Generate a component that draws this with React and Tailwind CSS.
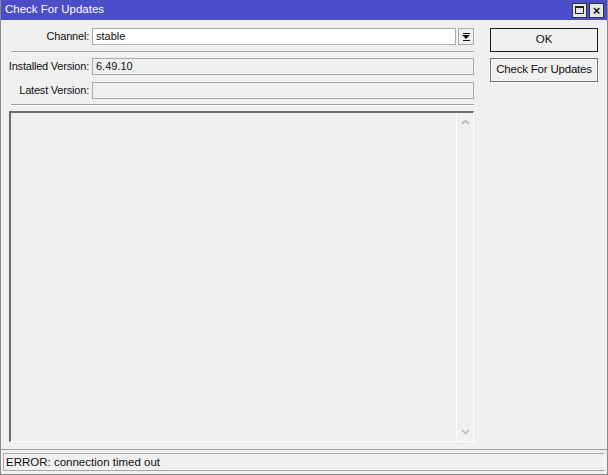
import React from "react";

const font = { fontFamily: '"Liberation Sans", Arial, sans-serif' };

const Field = ({ label, value, white, children }) => (
  <div className="flex items-center h-[17px]">
    <span className="w-[90px] pr-[3px] text-right text-[11px] tracking-[-0.2px] text-[#111] whitespace-nowrap">
      {label}
    </span>
    <div
      className={`flex-1 h-[17px] border border-[#a9a9a9] px-[3px] text-[11px] leading-[15px] text-[#111] ${
        white ? "bg-white" : "bg-[#f0f0f0]"
      }`}
    >
      {value}
    </div>
    {children}
  </div>
);

const App = () => {
  return (
    <div
      className="w-[608px] h-[475px] bg-[#f0f0f0] flex flex-col border-x border-b border-[#8a8a8a]"
      style={font}
    >
      {/* title bar */}
      <div className="h-[20px] bg-[#4b4ec8] flex items-center pl-[4px] pr-[3px] shrink-0">
        <span className="flex-1 text-white text-[11.5px]">Check For Updates</span>
        <div className="flex gap-[2px]">
          <div className="w-[15px] h-[15px] bg-[#e6e6e6] border border-[#333] flex items-center justify-center">
            <div className="w-[9px] h-[8px] border border-[#222] border-t-2" />
          </div>
          <div className="w-[15px] h-[15px] bg-[#e6e6e6] border border-[#333] flex items-center justify-center text-[13px] font-bold leading-none text-[#111]">
            ×
          </div>
        </div>
      </div>

      <div className="flex flex-1 min-h-0">
        {/* left column */}
        <div className="w-[473px] flex flex-col pl-[1px] pt-[8px]">
          <Field label="Channel:" value="stable" white>
            <div className="w-[16px] h-[17px] ml-[2px] border border-[#a9a9a9] bg-[#f0f0f0] flex flex-col items-center justify-center">
              <div className="w-[7px] h-[1px] bg-[#111]" />
              <div className="w-0 h-0 mt-[1px] border-x-[4px] border-x-transparent border-t-[4px] border-t-[#111]" />
              <div className="w-[7px] h-[1px] bg-[#111] mt-[1px]" />
            </div>
          </Field>
          <div className="ml-[9px] mt-[6px] h-[2px] border-t border-[#a0a0a0] border-b border-b-white" />
          <div className="mt-[5px] flex flex-col gap-[7px]">
            <Field label="Installed Version:" value="6.49.10" />
            <Field label="Latest Version:" value="" />
          </div>
          <div className="ml-[9px] mt-[5px] h-[2px] border-t border-[#a0a0a0] border-b border-b-white" />
          {/* log area */}
          <div className="ml-[7px] mt-[5px] flex-1 mb-[7px] border-t-2 border-l-2 border-t-[#6d6d6d] border-l-[#6d6d6d] border-r border-b border-r-white border-b-white flex">
            <div className="flex-1" />
            <div className="w-[17px] border-l border-white flex flex-col justify-between items-center py-[6px]">
              <svg width="9" height="6" viewBox="0 0 9 6">
                <path d="M1 5 L4.5 1.5 L8 5" fill="none" stroke="#b4b4b4" strokeWidth="1.5" />
              </svg>
              <svg width="9" height="6" viewBox="0 0 9 6">
                <path d="M1 1 L4.5 4.5 L8 1" fill="none" stroke="#b4b4b4" strokeWidth="1.5" />
              </svg>
            </div>
          </div>
        </div>

        {/* right column */}
        <div className="flex-1 flex flex-col items-start pl-[16px] pt-[8px] gap-[6px]">
          <button className="w-[108px] h-[24px] bg-[#f0f0f0] border border-[#1a1a1a] text-[11.5px] text-[#111]">
            OK
          </button>
          <button className="w-[108px] h-[24px] bg-[#f0f0f0] border border-[#777] text-[11.5px] tracking-[-0.2px] text-[#111]">
            Check For Updates
          </button>
        </div>
      </div>

      {/* status bar */}
      <div className="h-[25px] shrink-0 border-t border-[#a0a0a0] pt-[3px] px-[2px]">
        <div className="h-[18px] border border-[#a9a9a9] border-r-white px-[2px] text-[11.5px] leading-[16px] text-[#111]">
          ERROR: connection timed out
        </div>
      </div>
    </div>
  );
};

export default App;
